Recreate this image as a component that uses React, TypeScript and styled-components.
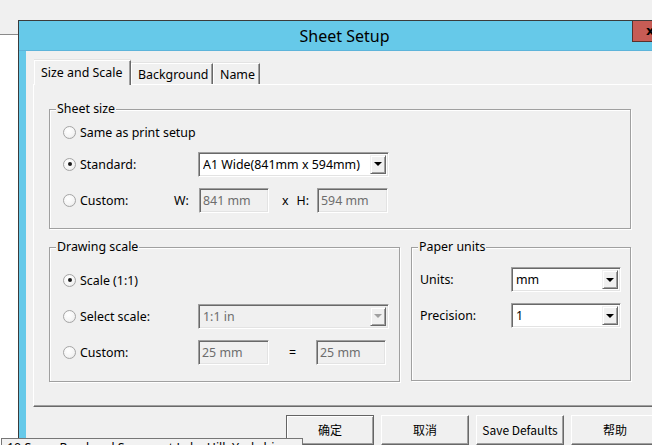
import React from 'react';
import styled, { createGlobalStyle, css } from 'styled-components';

const GlobalStyle = createGlobalStyle`
  html, body {
    margin: 0;
    padding: 0;
    background: #f0f0f0;
  }
  body {
    font-family: "Noto Sans", "Noto Sans CJK SC", sans-serif;
    font-size: 12.4px;
    color: #000;
  }
`;

const Desktop = styled.div`
  position: relative;
  width: 652px;
  height: 445px;
  overflow: hidden;
  background: #f0f0f0;
`;

/* window lying behind the dialog */
const BackWindow = styled.div`
  position: absolute;
  left: 0;
  top: 34px;
  width: 60px;
  height: 420px;
  background: #fff;
  border-top: 1px solid #8a8a8a;
`;

const Dialog = styled.div`
  position: absolute;
  left: 18px;
  top: 20px;
  width: 653px;
  height: 470px;
  box-sizing: border-box;
  border: 1px solid #3b3b3b;
  background: #66c9e9;
  display: flex;
  flex-direction: column;
`;

const TitleBar = styled.div`
  position: relative;
  height: 29px;
  flex-shrink: 0;
  display: flex;
  align-items: center;
  justify-content: center;
  border-bottom: 1px solid #5db4da;
  font-size: 16px;
  color: #000;
`;

const CloseButton = styled.div`
  position: absolute;
  top: 0;
  right: 0;
  width: 38px;
  height: 21px;
  box-sizing: border-box;
  background: #c75c55;
  border-left: 1px solid #5a302c;
  border-bottom: 1px solid #5a302c;
  display: flex;
  align-items: center;
  padding: 0 0 2px 13px;
  font-family: "DejaVu Sans", sans-serif;
  font-weight: bold;
  font-size: 13px;
  line-height: 1;
`;

const Client = styled.div`
  flex: 1;
  margin: 0 7px;
  padding: 9px 0 0 7px;
  background: #f0f0f0;
  display: flex;
  flex-direction: column;
`;

const TabStrip = styled.div`
  display: flex;
  align-items: flex-end;
  height: 24px;
  padding-left: 1px;
  position: relative;
  z-index: 1;
`;

const Tab = styled.div<{ $active?: boolean; $width: number }>`
  box-sizing: border-box;
  width: ${(p) => p.$width}px;
  display: flex;
  align-items: center;
  padding: 0 0 0 6px;
  background: #f0f0f0;
  border-top: 1px solid #fff;
  border-left: 1px solid #fff;
  border-right: 1px solid #696969;
  box-shadow: inset -1px 0 0 #a0a0a0, 0 -1px 0 #e3e3e3;
  white-space: nowrap;
  ${(p) =>
    p.$active
      ? css`
          height: 25px;
          margin-bottom: -1px;
          padding-bottom: 2px;
        `
      : css`
          height: 21px;
          padding-top: 1px;
        `}
`;

const Panel = styled.div`
  box-sizing: border-box;
  height: 323px;
  margin-right: 7px;
  border-top: 1px solid #fff;
  border-left: 1px solid #fff;
  border-bottom: 1px solid #696969;
  box-shadow: inset 0 -1px 0 #a0a0a0;
  padding: 24px 0 0 15px;
  display: flex;
  flex-direction: column;
  gap: 18px;
`;

const Group = styled.div<{ $width: number; $height?: number; $pad: string }>`
  position: relative;
  box-sizing: border-box;
  width: ${(p) => p.$width}px;
  ${(p) => p.$height && `height: ${p.$height}px;`}
  border: 1px solid #a0a0a0;
  box-shadow: inset 1px 1px 0 #fff, 1px 1px 0 #fff;
  padding: ${(p) => p.$pad};
`;

const Caption = styled.span`
  position: absolute;
  top: -9px;
  left: 6px;
  padding: 0 1px;
  background: #f0f0f0;
  line-height: 16px;
`;

const GroupRow = styled.div`
  display: flex;
  gap: 11px;
`;

const Row = styled.div<{ $h: number; $mt?: number }>`
  display: flex;
  align-items: center;
  height: ${(p) => p.$h}px;
  margin-top: ${(p) => p.$mt ?? 0}px;
`;

const Option = styled.label<{ $width?: number }>`
  display: flex;
  align-items: center;
  flex-shrink: 0;
  ${(p) => p.$width && `width: ${p.$width}px;`}
`;

const RadioDot = styled.span<{ $checked?: boolean }>`
  position: relative;
  width: 13px;
  height: 13px;
  box-sizing: border-box;
  border-radius: 50%;
  border: 1px solid #a5a5a5;
  background: radial-gradient(circle at 40% 35%, #ffffff 0%, #f4f4f4 60%, #dcdcdc 100%);
  margin-right: 4px;
  flex-shrink: 0;
  ${(p) =>
    p.$checked &&
    css`
      &::after {
        content: '';
        position: absolute;
        left: 3.5px;
        top: 3.5px;
        width: 4px;
        height: 4px;
        border-radius: 50%;
        background: #1a1a1a;
      }
    `}
`;

const Label = styled.span<{ $width?: number }>`
  flex-shrink: 0;
  ${(p) => p.$width && `width: ${p.$width}px;`}
`;

const Sunken = css`
  box-sizing: border-box;
  border-top: 1px solid #a0a0a0;
  border-left: 1px solid #a0a0a0;
  border-right: 1px solid #fff;
  border-bottom: 1px solid #fff;
  box-shadow: inset 1px 1px 0 #696969, inset -1px -1px 0 #e3e3e3;
`;

const Field = styled.div<{ $width: number }>`
  ${Sunken};
  width: ${(p) => p.$width}px;
  height: 25px;
  flex-shrink: 0;
  display: flex;
  align-items: center;
  padding: 0 3px;
  background: #f0f0f0;
  color: #6d6d6d;
`;

const ComboBox = styled.div<{ $width: number; $disabled?: boolean }>`
  ${Sunken};
  width: ${(p) => p.$width}px;
  height: 25px;
  flex-shrink: 0;
  display: flex;
  align-items: center;
  padding: 2px 2px 2px 4px;
  background: ${(p) => (p.$disabled ? '#f0f0f0' : '#fff')};
  color: ${(p) => (p.$disabled ? '#6d6d6d' : '#000')};
`;

const ComboText = styled.span`
  flex: 1;
  white-space: nowrap;
  overflow: hidden;
`;

const DropButton = styled.span<{ $disabled?: boolean }>`
  box-sizing: border-box;
  width: 16px;
  height: 100%;
  flex-shrink: 0;
  display: flex;
  align-items: center;
  justify-content: center;
  background: #f0f0f0;
  border-top: 1px solid #f0f0f0;
  border-left: 1px solid #f0f0f0;
  border-right: 1px solid #696969;
  border-bottom: 1px solid #696969;
  box-shadow: inset 1px 1px 0 #fff, inset -1px -1px 0 #a0a0a0;

  &::after {
    content: '';
    border-left: 4px solid transparent;
    border-right: 4px solid transparent;
    border-top: 4px solid ${(p) => (p.$disabled ? '#a0a0a0' : '#000')};
  }
`;

const Between = styled.div<{ $width: number; $center?: boolean }>`
  width: ${(p) => p.$width}px;
  flex-shrink: 0;
  display: flex;
  align-items: center;
  gap: 8px;
  ${(p) => (p.$center ? 'justify-content: center;' : 'padding-left: 13px; box-sizing: border-box;')}
`;

const ButtonRow = styled.div`
  display: flex;
  justify-content: flex-end;
  gap: 7px;
  margin-top: 8px;
  padding-right: 4px;
`;

const Button = styled.div<{ $default?: boolean }>`
  box-sizing: border-box;
  width: 88px;
  height: 30px;
  display: flex;
  align-items: center;
  justify-content: center;
  padding-bottom: 2px;
  background: #f0f0f0;
  border-top: 1px solid #fff;
  border-left: 1px solid #fff;
  border-right: 1px solid #696969;
  border-bottom: 1px solid #696969;
  box-shadow: inset -1px -1px 0 #a0a0a0;
  font-family: "Noto Sans CJK SC", "Noto Sans", sans-serif;
  font-size: 12px;
  ${(p) =>
    p.$default &&
    css`
      border-color: #646464;
      box-shadow: inset 1px 1px 0 #fff, inset -1px -1px 0 #a0a0a0;
    `}
`;

const Tooltip = styled.div`
  position: absolute;
  left: 1px;
  top: 438px;
  width: 302px;
  height: 24px;
  box-sizing: border-box;
  border: 1px solid #767676;
  background: #f2f2f2;
  padding: 0 5px;
  line-height: 18px;
  white-space: nowrap;
  overflow: hidden;
`;

function Radio({ label, checked, width }: { label: string; checked?: boolean; width?: number }) {
  return (
    <Option $width={width}>
      <RadioDot $checked={checked} />
      {label}
    </Option>
  );
}

function Combo({ value, width, disabled }: { value: string; width: number; disabled?: boolean }) {
  return (
    <ComboBox $width={width} $disabled={disabled}>
      <ComboText>{value}</ComboText>
      <DropButton $disabled={disabled} />
    </ComboBox>
  );
}

export default function App() {
  return (
    <>
      <GlobalStyle />
      <Desktop>
        <BackWindow />
        <Dialog>
          <TitleBar>
            Sheet Setup
            <CloseButton>x</CloseButton>
          </TitleBar>
          <Client>
            <TabStrip>
              <Tab $active $width={97}>Size and Scale</Tab>
              <Tab $width={82}>Background</Tab>
              <Tab $width={47}>Name</Tab>
            </TabStrip>
            <Panel>
              <Group $width={582} $pad="10px 0 15px 13px">
                <Caption>Sheet size</Caption>
                <Row $h={24}>
                  <Radio label="Same as print setup" />
                </Row>
                <Row $h={24} $mt={8}>
                  <Radio label="Standard:" checked width={135} />
                  <Combo value="A1 Wide(841mm x 594mm)" width={191} />
                </Row>
                <Row $h={25} $mt={12}>
                  <Radio label="Custom:" width={111} />
                  <Label $width={25}>W:</Label>
                  <Field $width={70}>841 mm</Field>
                  <Between $width={48}>
                    <span>x</span>
                    <span>H:</span>
                  </Between>
                  <Field $width={71}>594 mm</Field>
                </Row>
              </Group>
              <GroupRow>
                <Group $width={351} $height={135} $pad="20px 0 0 13px">
                  <Caption>Drawing scale</Caption>
                  <Row $h={24}>
                    <Radio label="Scale (1:1)" checked />
                  </Row>
                  <Row $h={24} $mt={12}>
                    <Radio label="Select scale:" width={135} />
                    <Combo value="1:1 in" width={191} disabled />
                  </Row>
                  <Row $h={25} $mt={12}>
                    <Radio label="Custom:" width={135} />
                    <Field $width={71}>25 mm</Field>
                    <Between $width={47} $center>
                      =
                    </Between>
                    <Field $width={70}>25 mm</Field>
                  </Row>
                </Group>
                <Group $width={220} $height={134} $pad="19px 0 0 8px">
                  <Caption>Paper units</Caption>
                  <Row $h={25}>
                    <Label $width={91}>Units:</Label>
                    <Combo value="mm" width={110} />
                  </Row>
                  <Row $h={25} $mt={11}>
                    <Label $width={91}>Precision:</Label>
                    <Combo value="1" width={110} />
                  </Row>
                </Group>
              </GroupRow>
            </Panel>
            <ButtonRow>
              <Button $default>确定</Button>
              <Button>取消</Button>
              <Button>Save Defaults</Button>
              <Button>帮助</Button>
            </ButtonRow>
          </Client>
        </Dialog>
        <Tooltip>10 Sears Road and Somerset Lake Hill, Yorkshire</Tooltip>
      </Desktop>
    </>
  );
}
